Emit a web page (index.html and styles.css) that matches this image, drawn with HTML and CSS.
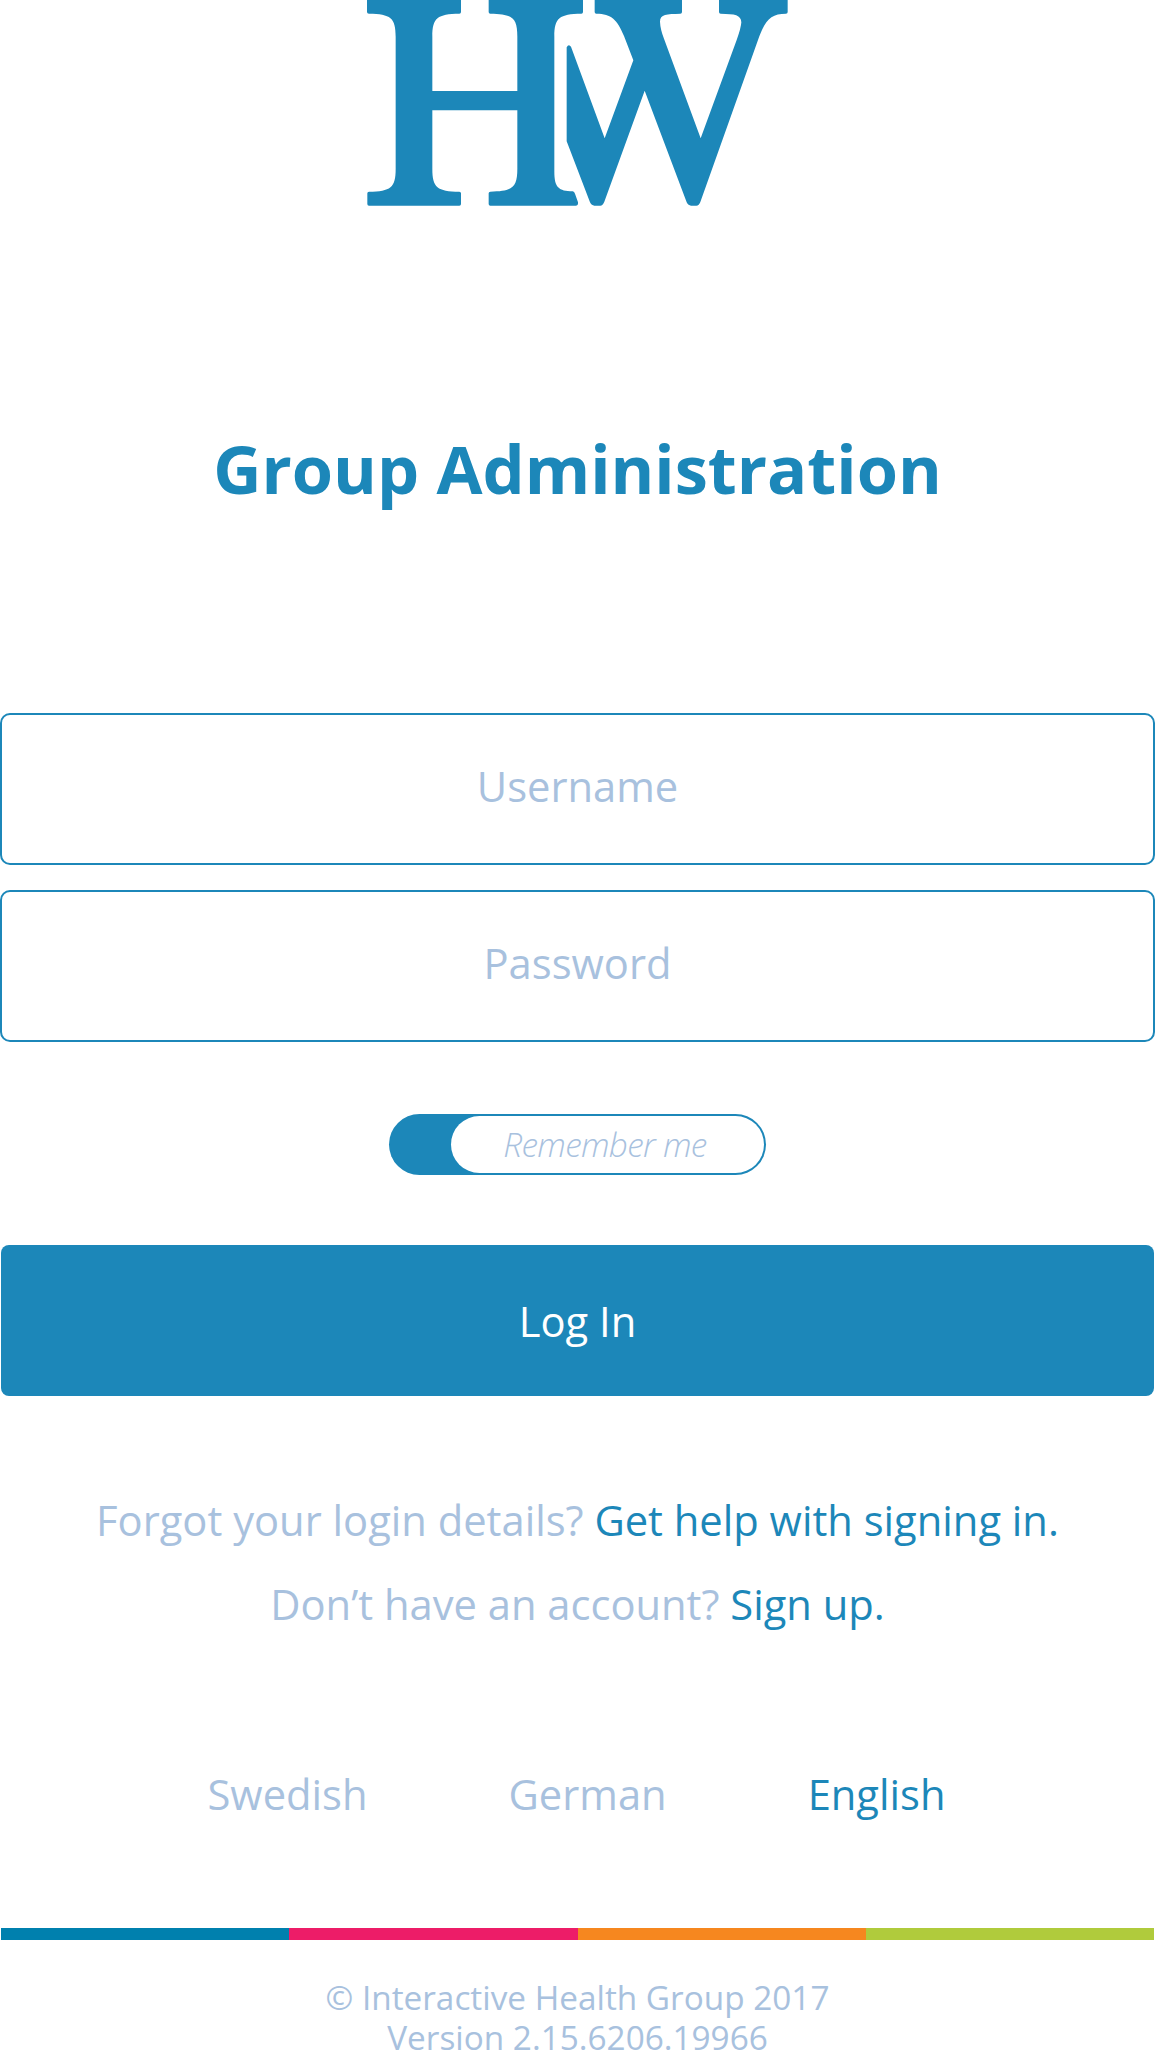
FILE: index.html
```html
<!DOCTYPE html>
<html lang="en">
<head>
<meta charset="utf-8">
<title>Group Administration</title>
<link rel="stylesheet" href="styles.css">
</head>
<body>
<main class="page">
  <svg class="logo" viewBox="0 0 1365 660" role="img" aria-label="HW">
    <path d="M51 0H333V36Q333 41 328 41C262 42 247 53 247 110V273H502V110C502 53 487 42 421 41Q416 41 416 36V0H699V36Q699 41 694 41C628 42 613 53 613 110V515C613 562 626 573 668 574Q673 575 675 581L684 607Q685 617 677 617H421Q416 617 416 612V580Q416 575 421 575C487 574 502 563 502 506V331H247V506C247 563 262 574 328 575Q333 575 333 580V612Q333 617 328 617H57Q52 617 52 612V580Q52 575 57 575C122 574 137 563 137 506V110C137 53 122 42 57 41Q51 41 51 36Z"/>
    <path d="M734 0H996V36Q996 41 991 41C950 42 930 42 930 65Q931 88 942 116L1052 415L1160 120Q1173 84 1174 67C1173 44 1155 42 1112 41Q1107 41 1107 36V0H1313V36Q1313 41 1308 41C1265 41 1248 57 1228 109L1051 606Q1047 617 1039 617H1023Q1015 617 1010 607L884 272L763 605Q758 617 751 617H733Q725 617 720 607L650 424V142Q656 130 663 140L764 415L850 181L822 108C801 58 785 42 739 41Q734 41 734 36Z"/>
  </svg>

  <h1 class="title">Group Administration</h1>

  <form class="login">
    <label class="field">Username</label>
    <label class="field">Password</label>
    <div class="remember"><span class="remember-label">Remember me</span></div>
    <button class="submit" type="button">Log In</button>
  </form>

  <div class="help">
    <p>Forgot your login details? <a>Get help with signing in.</a></p>
    <p>Don’t have an account? <a>Sign up.</a></p>
  </div>

  <nav class="languages">
    <a>Swedish</a>
    <a>German</a>
    <a class="current">English</a>
  </nav>

  <div class="stripe"><i class="blue"></i><i class="pink"></i><i class="orange"></i><i class="green"></i></div>

  <footer class="footer">
    <p>© Interactive Health Group 2017</p>
    <p>Version 2.15.6206.19966</p>
  </footer>
</main>
</body>
</html>
```
FILE: styles.css
```css
* { box-sizing: border-box; }
html { overflow: hidden; }
body { margin: 0; background: #fff; }
p, h1 { margin: 0; }

.page {
  height: 2059px;
  overflow: hidden;
  display: flex;
  flex-direction: column;
  font: 41.7px/84px "Open Sans", "Noto Sans", sans-serif;
  color: #a8c1de;
  text-align: center;
  white-space: nowrap;
}

.logo { width: 455px; height: 220px; align-self: center; flex: none; fill: #1c87b9; }

.title { margin-top: 199px; font-size: 66.7px; font-weight: 700; line-height: 100px; color: #1c87b9; }

.login { display: flex; flex-direction: column; align-items: center; margin-top: 194px; }

.field {
  width: 100%;
  height: 152px;
  margin-bottom: 25px;
  border: 2px solid #1c87b9;
  border-radius: 10px;
  line-height: 142px;
}

.remember {
  width: 377px;
  height: 61px;
  margin-top: 47px;
  padding: 2px 2px 2px 62px;
  border-radius: 31px;
  background: #1c87b9;
}
.remember-label {
  display: block;
  height: 57px;
  padding-right: 5px;
  border-radius: 29px;
  background: #fff;
  font-size: 33.4px;
  font-style: italic;
  font-weight: 300;
  letter-spacing: -0.7px;
  line-height: 56px;
}

.submit {
  width: 1153px;
  height: 150.5px;
  margin-top: 70px;
  padding: 2px 0 0;
  border: 0;
  border-radius: 8px;
  background: #1c87b9;
  color: #fff;
  font: inherit;
}

.help { margin-top: 82.5px; }
.help a, .languages .current { color: #1c87b9; }

.languages { display: flex; justify-content: center; gap: 141px; margin-top: 106px; padding-right: 2px; }

.stripe { display: flex; height: 12px; margin: 92px 1px 0; flex: none; }
.stripe i { flex: 1; }
.blue { background: #0080ae; }
.pink { background: #ed1c68; }
.orange { background: #f6871f; }
.green { background: #b0cb3c; }

.footer { margin-top: 37px; font-size: 33.35px; line-height: 40px; }
```
